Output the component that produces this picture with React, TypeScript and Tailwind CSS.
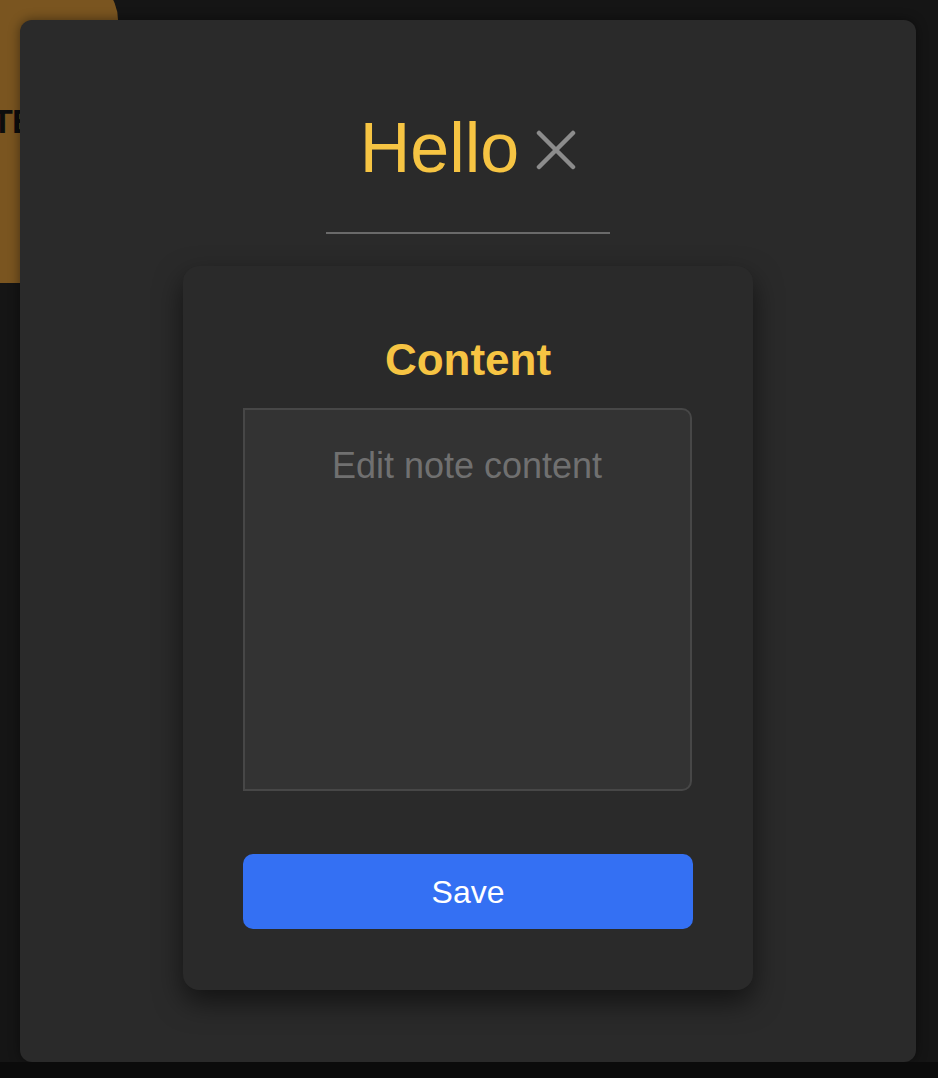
import { useState } from 'react';

export default function App() {
  const [text, setText] = useState('');

  return (
    <div className="min-h-screen bg-[#0b0b0b] font-['Liberation_Sans',Arial,sans-serif]">
      <div className="relative h-[1062px] overflow-hidden bg-[#151515]">
        {/* note card peeking out behind the modal */}
        <div className="absolute -left-10 -top-6 h-[307px] w-[158px] rounded-tr-[44px] bg-[#7a5520]">
          <span className="absolute left-[32px] top-[128px] text-[34px] font-bold leading-none tracking-tight text-[#0d0d0d]">
            TE
          </span>
        </div>

        <div className="absolute left-5 top-5 flex h-[1042px] w-[896px] flex-col items-center rounded-xl bg-[#2a2a2a] pt-[88px] shadow-[0_0_12px_rgba(0,0,0,0.45)]">
          <div className="flex h-20 items-center gap-[17px]">
            <h1 className="text-[70px] leading-[80px] text-[#f6c443]">Hello</h1>
            <button className="mt-[4px] text-[#8c8c8c]">
              <svg width="40" height="40" viewBox="0 0 40 40" fill="none" stroke="currentColor" strokeWidth="4.5" strokeLinecap="round">
                <path d="M3 3L37 37M37 3L3 37" />
              </svg>
            </button>
          </div>

          <div className="mt-[44px] h-[2px] w-[284px] bg-[#6a6a6a]" />

          <div className="mt-8 flex w-[570px] flex-col items-center rounded-2xl bg-[#2a2a2a] px-[60px] pb-[61px] pt-[69px] shadow-[0_12px_28px_rgba(0,0,0,0.55)]">
            <h2 className="text-[44px] font-bold leading-[50px] text-[#f6c443]">Content</h2>
            <textarea
              value={text}
              onChange={(e) => setText(e.target.value)}
              placeholder="Edit note content"
              className="mt-[23px] ml-[-2px] h-[383px] w-[449px] resize-none rounded-r-[10px] border-2 border-[#474747] bg-[#333333] px-4 pt-[29px] text-center text-[36px] text-white outline-none placeholder:text-[#707070]"
            />
            <button className="mt-[63px] h-[75px] w-[450px] rounded-[10px] bg-[#3470f3] text-[32px] text-white">
              Save
            </button>
          </div>
        </div>
      </div>
    </div>
  );
}
